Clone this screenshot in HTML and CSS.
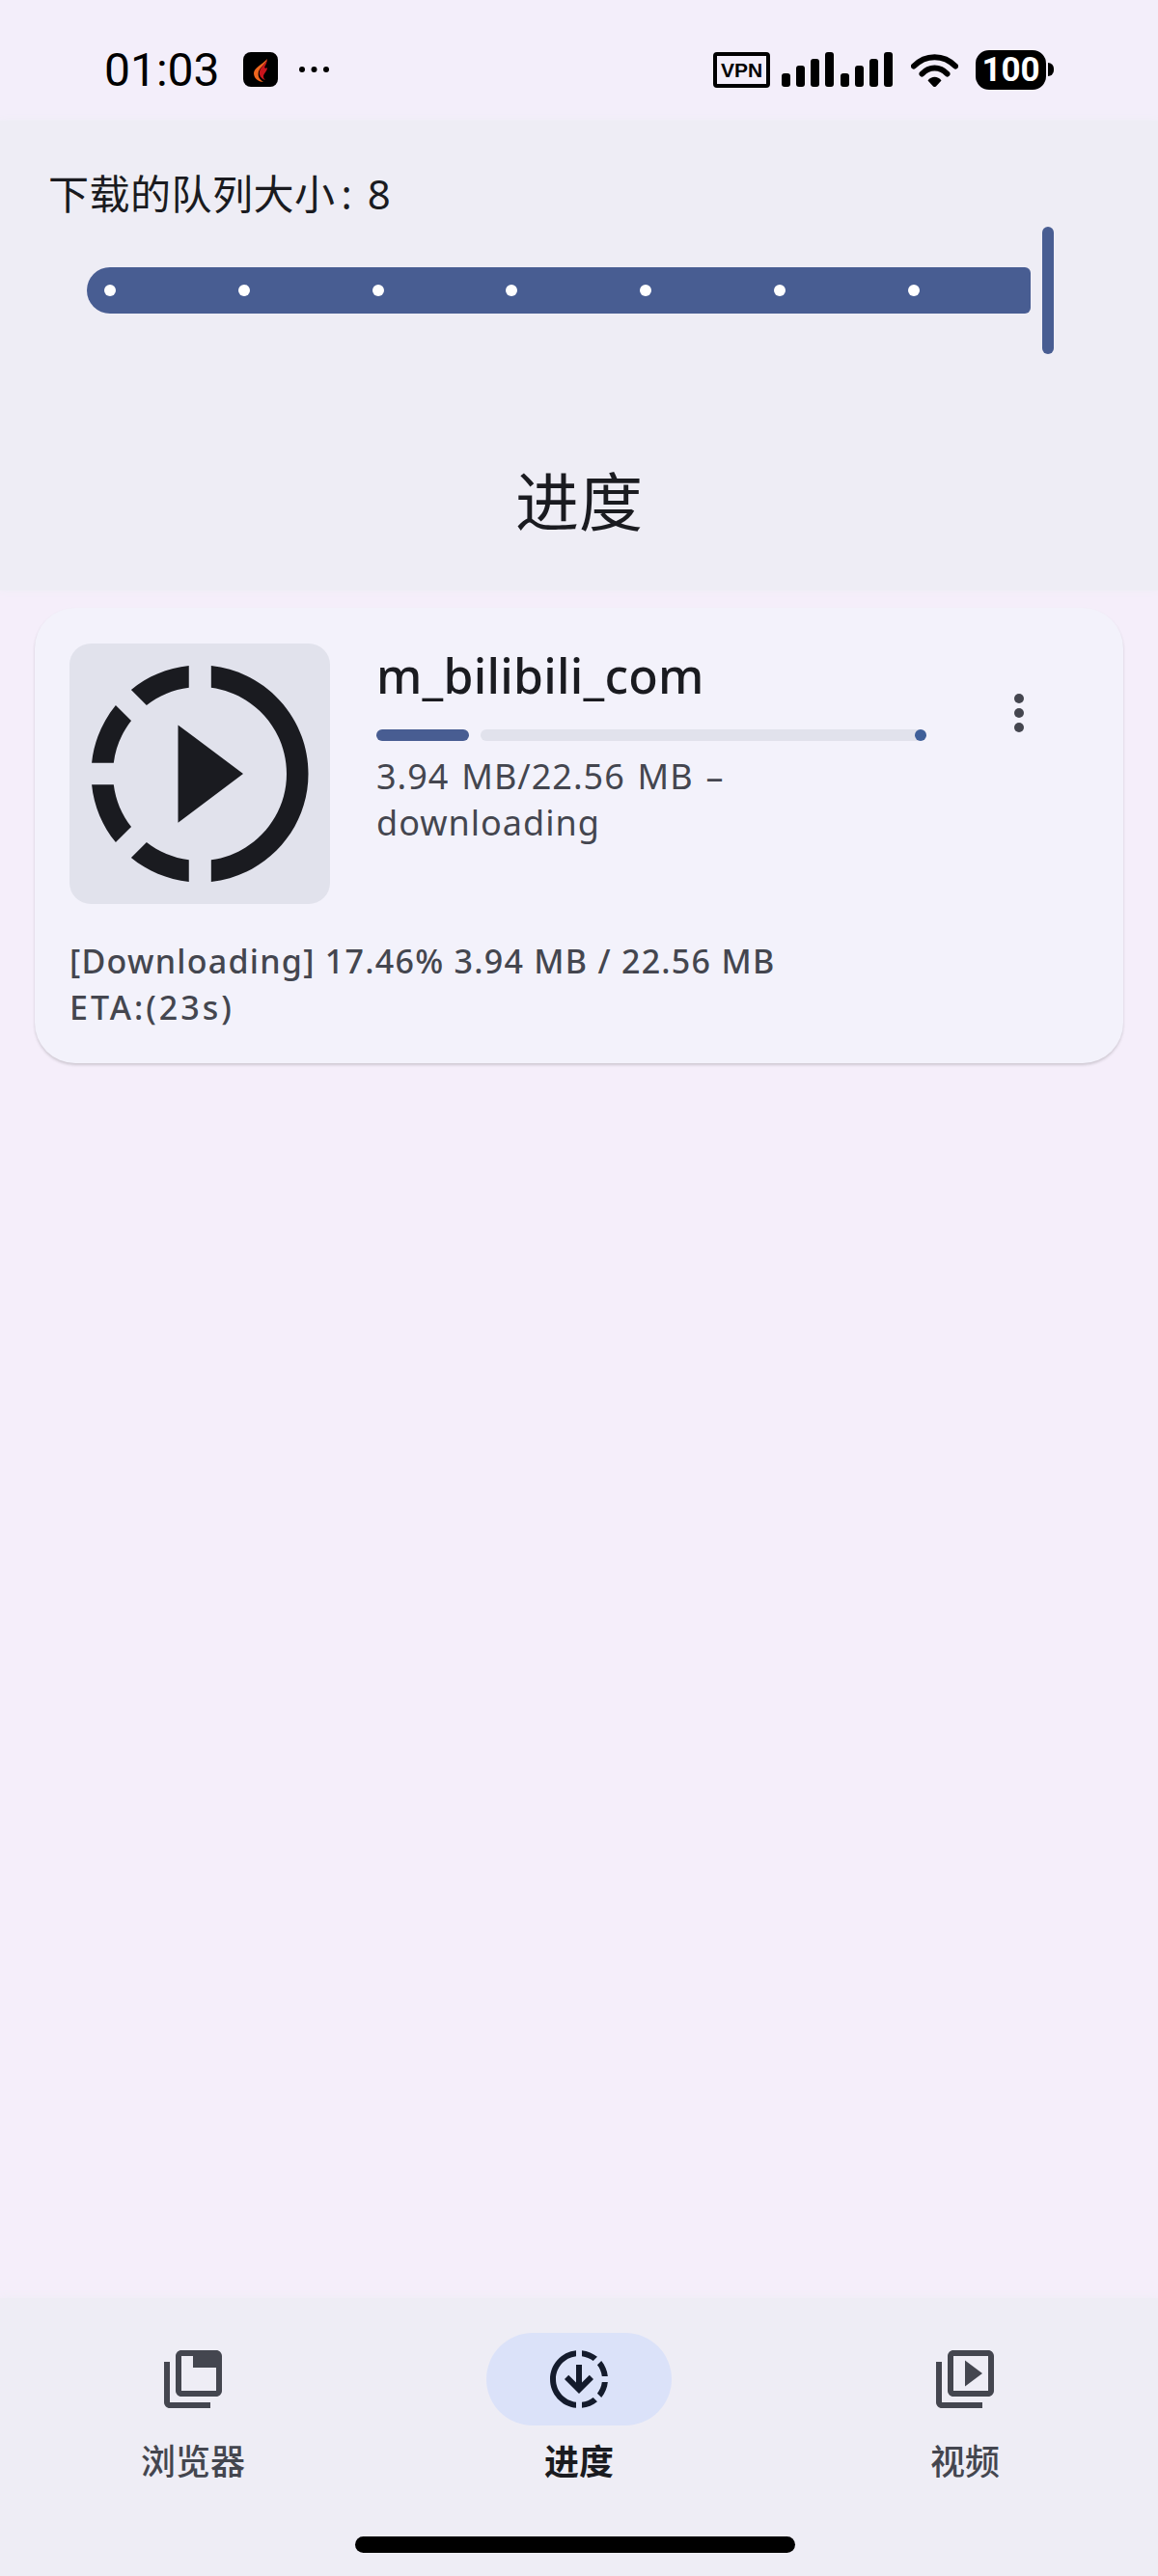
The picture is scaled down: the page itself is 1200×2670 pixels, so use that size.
FILE: index.html
```html
<!DOCTYPE html>
<html lang="zh-CN">
<head>
    <meta charset="UTF-8">
    <meta name="viewport" content="width=device-width, initial-scale=1.0">
    <title>进度</title>
    <link rel="stylesheet" href="styles.css">
</head>
<body>
    <div class="status-bar">
        <span class="clock">01:03</span>
        <svg class="app-icon" viewBox="0 0 36 36">
            <rect width="36" height="36" rx="8" fill="#000"/>
            <path d="M25 7c-1 5-7 8-9 13-1 4 0 8 5 11-4 0-10-3-10-9 0-6 9-9 14-15z" fill="#f0661e"/>
            <path d="M25 7c0 4-2 6-3 9 1 1 2 1 3 0 0 4-4 6-4 9 0 2 1 3 2 4-4-1-7-5-6-9 1-5 7-8 8-13z" fill="#c8141c"/>
        </svg>
        <svg class="more-dots" viewBox="0 0 33 10">
            <circle cx="4" cy="5" r="3"/>
            <circle cx="16.500" cy="5" r="3"/>
            <circle cx="29" cy="5" r="3"/>
        </svg>
        <div class="status-right">
            <span class="vpn">VPN</span>
            <div class="signal">
                <i class="bar-1"></i><i class="bar-2"></i><i class="bar-3"></i><i class="bar-4"></i>
            </div>
            <div class="signal">
                <i class="bar-1"></i><i class="bar-2"></i><i class="bar-3"></i><i class="bar-4"></i>
            </div>
            <svg class="wifi" viewBox="0 0 49 36">
                <path d="M3 14.500C15 2 34 2 46 14.500" fill="none" stroke="#000" stroke-width="6" stroke-linecap="round"/>
                <path d="M11.500 22.500C19 14.500 30 14.500 37.500 22.500" fill="none" stroke="#000" stroke-width="6" stroke-linecap="round"/>
                <path d="M17.500 29.500C21 24.500 28 24.500 31.500 29.500L26 35.500C25 36.300 24 36.300 23 35.500z"/>
            </svg>
            <div class="battery">
                <span class="battery-body">100</span>
                <span class="battery-cap"></span>
            </div>
        </div>
    </div>

    <header class="top-panel">
        <div class="queue-label">下载的队列大小<span class="queue-colon">:</span> 8</div>
        <div class="slider">
            <div class="slider-track">
                <span class="tick"></span>
                <span class="tick"></span>
                <span class="tick"></span>
                <span class="tick"></span>
                <span class="tick"></span>
                <span class="tick"></span>
                <span class="tick"></span>
            </div>
            <div class="slider-handle"></div>
        </div>
        <h1 class="page-title">进度</h1>
    </header>

    <main class="content">
        <section class="card">
            <div class="card-top">
                <div class="thumb">
                    <svg viewBox="0 0 24 24">
                        <path d="M10 7.500v9l6-4.500zM11 4.070V2.050c-2.010.2-3.840 1-5.320 2.210L7.100 5.690c1.110-.86 2.440-1.440 3.900-1.620zM5.690 7.100L4.260 5.680C3.050 7.160 2.250 8.990 2.050 11h2.020c.18-1.460.76-2.790 1.620-3.900zM4.070 13H2.050c.2 2.010 1 3.840 2.210 5.320l1.430-1.430c-.86-1.100-1.440-2.430-1.620-3.890zm1.610 6.740C7.160 20.950 9 21.750 11 21.950v-2.020c-1.460-.18-2.790-.76-3.900-1.620l-1.420 1.430zM22 12c0 5.160-3.920 9.420-8.950 9.950v-2.020C16.970 19.410 20 16.050 20 12s-3.030-7.410-6.950-7.930V2.050C18.080 2.580 22 6.840 22 12z"/>
                    </svg>
                </div>
                <div class="card-info">
                    <div class="card-title">m_bilibili_com</div>
                    <div class="progress">
                        <div class="progress-done"></div>
                        <div class="progress-rest"></div>
                        <div class="progress-stop"></div>
                    </div>
                    <div class="card-sub">3.94 MB/22.56 MB – downloading</div>
                </div>
                <svg class="card-menu" viewBox="0 0 24 24">
                    <circle cx="12" cy="6" r="2"/>
                    <circle cx="12" cy="12" r="2"/>
                    <circle cx="12" cy="18" r="2"/>
                </svg>
            </div>
            <div class="card-log">[Downloading] 17.46% 3.94 MB / 22.56 MB<br><span class="log-eta">ETA:(23s)</span></div>
        </section>
    </main>

    <nav class="bottom-nav">
        <div class="nav-items">
            <div class="nav-item">
                <div class="nav-icon">
                    <svg viewBox="0 0 24 24">
                        <path d="M4 6H2v14c0 1.100.9 2 2 2h14v-2H4V6zm16-4H8c-1.100 0-2 .9-2 2v12c0 1.100.9 2 2 2h12c1.100 0 2-.9 2-2V4c0-1.100-.9-2-2-2zm0 14H8V4h4v4h8v8z"/>
                    </svg>
                </div>
                <div class="nav-label">浏览器</div>
            </div>
            <div class="nav-item active">
                <div class="nav-icon">
                    <svg viewBox="0 0 24 24">
                        <path d="M18.320 4.260C16.840 3.050 15.010 2.250 13 2.050v2.020c1.460.18 2.790.76 3.900 1.620l1.420-1.430zM19.930 11h2.020c-.2-2.010-1-3.840-2.210-5.320L18.310 7.100c.86 1.110 1.440 2.440 1.620 3.900zM18.310 16.900l1.430 1.430c1.210-1.480 2.010-3.320 2.210-5.320h-2.020c-.18 1.450-.76 2.780-1.620 3.890zM13 19.930v2.020c2.010-.2 3.840-1 5.320-2.210l-1.430-1.430c-1.100.86-2.430 1.440-3.890 1.620zM15.590 10.590L13 13.170V7h-2v6.170l-2.590-2.580L7 12l5 5 5-5-1.410-1.410zM11 19.930v2.020c-5.050-.5-9-4.760-9-9.950s3.950-9.450 9-9.950v2.020C7.050 4.560 4 7.920 4 12s3.050 7.440 7 7.930z"/>
                    </svg>
                </div>
                <div class="nav-label">进度</div>
            </div>
            <div class="nav-item">
                <div class="nav-icon">
                    <svg viewBox="0 0 24 24">
                        <path d="M4 6H2v14c0 1.100.9 2 2 2h14v-2H4V6zm16-4H8c-1.100 0-2 .9-2 2v12c0 1.100.9 2 2 2h12c1.100 0 2-.9 2-2V4c0-1.100-.9-2-2-2zm0 14H8V4h12v12zM12 5.500v9l6-4.500z"/>
                    </svg>
                </div>
                <div class="nav-label">视频</div>
            </div>
        </div>
        <div class="home-bar"></div>
    </nav>
</body>
</html>
```

FILE: styles.css
```css
* {
    box-sizing: border-box;
}
body {
    margin: 0;
    width: 1200px;
    height: 2670px;
    display: flex;
    flex-direction: column;
    font-family: "Noto Sans", "Noto Sans CJK SC", sans-serif;
    background-color: #f5eefa;
    color: #1a1b20;
}

/* status bar */
.status-bar {
    height: 125px;
    padding: 19px 108px 0 108px;
    display: flex;
    align-items: center;
    background-color: #f3eefa;
}
.clock {
    font-family: Roboto, sans-serif;
    font-size: 48px;
    font-weight: 450;
    color: #000;
}
.app-icon {
    width: 36px;
    height: 36px;
    margin-left: 24px;
}
.more-dots {
    width: 33px;
    height: 10px;
    margin-left: 21px;
}
.status-right {
    margin-left: auto;
    display: flex;
    align-items: center;
}
.vpn {
    width: 59px;
    height: 37px;
    border: 4px solid #000;
    border-radius: 4px;
    font-family: "Liberation Sans", sans-serif;
    font-size: 21px;
    font-weight: bold;
    line-height: 29px;
    text-align: center;
    color: #000;
}
.signal {
    display: flex;
    align-items: flex-end;
    gap: 6px;
    height: 36px;
    margin-left: 12px;
}
.signal + .signal {
    margin-left: 7px;
}
.signal i {
    width: 9px;
    border-radius: 3px;
    background-color: #000;
}
.bar-1 { height: 14px; }
.bar-2 { height: 22px; }
.bar-3 { height: 29px; }
.bar-4 { height: 36px; }
.wifi {
    width: 49px;
    height: 36px;
    margin-left: 19px;
}
.battery {
    display: flex;
    align-items: center;
    margin-left: 18px;
}
.battery-body {
    width: 73px;
    height: 41px;
    border-radius: 14px;
    background-color: #000;
    color: #fff;
    font-family: Roboto, sans-serif;
    font-size: 35px;
    font-weight: 700;
    line-height: 41px;
    text-align: center;
}
.battery-cap {
    width: 6px;
    height: 14px;
    margin-left: 2px;
    border-radius: 0 7px 7px 0;
    background-color: #000;
}

/* queue slider + title */
.top-panel {
    height: 487px;
    padding-top: 48px;
    background-color: #eeedf5;
    box-shadow: 0 0 8px #eeedf5;
}
.queue-label {
    padding-left: 50px;
    font-size: 42px;
    line-height: 56px;
    letter-spacing: 0.500px;
    word-spacing: 4px;
}
.queue-colon {
    margin-left: 6px;
}
.slider {
    margin-top: 6px;
    padding-left: 90px;
    display: flex;
    align-items: center;
    gap: 12px;
}
.slider-track {
    width: 978px;
    height: 48px;
    padding-left: 18px;
    display: flex;
    align-items: center;
    gap: 126.800px;
    border-radius: 24px 6px 6px 24px;
    background-color: #485d92;
}
.tick {
    width: 12px;
    height: 12px;
    border-radius: 50%;
    background-color: #fff;
}
.slider-handle {
    width: 12px;
    height: 132px;
    border-radius: 6px;
    background-color: #485d92;
}
.page-title {
    margin: 108px 0 0;
    font-size: 66px;
    font-weight: 400;
    line-height: 88px;
    text-align: center;
}

/* download card */
.content {
    flex: 1;
    padding: 18px 36px 0;
}
.card {
    padding: 37px 36px 34px;
    border-radius: 42px;
    background-color: #f3f2fb;
    box-shadow: 0 2px 3px rgba(0, 0, 0, 0.16);
}
.card-top {
    display: flex;
    align-items: flex-start;
}
.thumb {
    width: 270px;
    height: 270px;
    flex-shrink: 0;
    border-radius: 22px;
    background-color: #e1e2ec;
}
.thumb svg {
    display: block;
    width: 270px;
    height: 270px;
    fill: #1a1b20;
}
.card-info {
    width: 570px;
    margin-left: 48px;
}
.card-title {
    font-size: 50px;
    font-weight: 500;
    line-height: 66px;
    letter-spacing: 0.250px;
}
.progress {
    margin-top: 23px;
    display: flex;
    align-items: center;
}
.progress-done {
    width: 96px;
    height: 12px;
    border-radius: 6px;
    background-color: #485d92;
}
.progress-rest {
    flex: 1;
    height: 12px;
    margin-left: 12px;
    border-radius: 6px 0 0 6px;
    background-color: #e1e2ec;
}
.progress-stop {
    width: 12px;
    height: 12px;
    margin-left: -6px;
    border-radius: 50%;
    background-color: #3f5f99;
}
.card-sub {
    margin-top: 13px;
    font-size: 36px;
    line-height: 48px;
    letter-spacing: 1px;
    word-spacing: 2.500px;
    color: #44464f;
}
.card-menu {
    width: 60px;
    height: 60px;
    margin: 42px 0 0 66px;
    fill: #44464f;
}
.card-log {
    margin-top: 35px;
    font-size: 34px;
    font-weight: 500;
    line-height: 48px;
    letter-spacing: 1.270px;
    color: #44464f;
}
.log-eta {
    letter-spacing: 3px;
}

/* bottom navigation */
.bottom-nav {
    height: 288px;
    background-color: #eeedf5;
    box-shadow: 0 0 10px #eeedf5;
}
.nav-items {
    display: grid;
    grid-template-columns: repeat(3, 400px);
    padding-top: 36px;
}
.nav-item {
    display: flex;
    flex-direction: column;
    align-items: center;
    color: #44464f;
}
.nav-icon {
    width: 192px;
    height: 96px;
    display: flex;
    align-items: center;
    justify-content: center;
    border-radius: 48px;
}
.nav-icon svg {
    width: 72px;
    height: 72px;
    fill: currentColor;
}
.nav-label {
    margin-top: 13px;
    font-size: 36px;
    font-weight: 500;
    line-height: 50px;
}
.nav-item.active {
    color: #1a1b20;
}
.nav-item.active .nav-label {
    font-weight: 700;
}
.nav-item.active .nav-icon {
    background-color: #dbe2f9;
}
.nav-item.active svg {
    fill: #141b2c;
}
.home-bar {
    width: 456px;
    height: 17px;
    margin: 52px 0 0 368px;
    border-radius: 9px;
    background-color: #000;
}
```
